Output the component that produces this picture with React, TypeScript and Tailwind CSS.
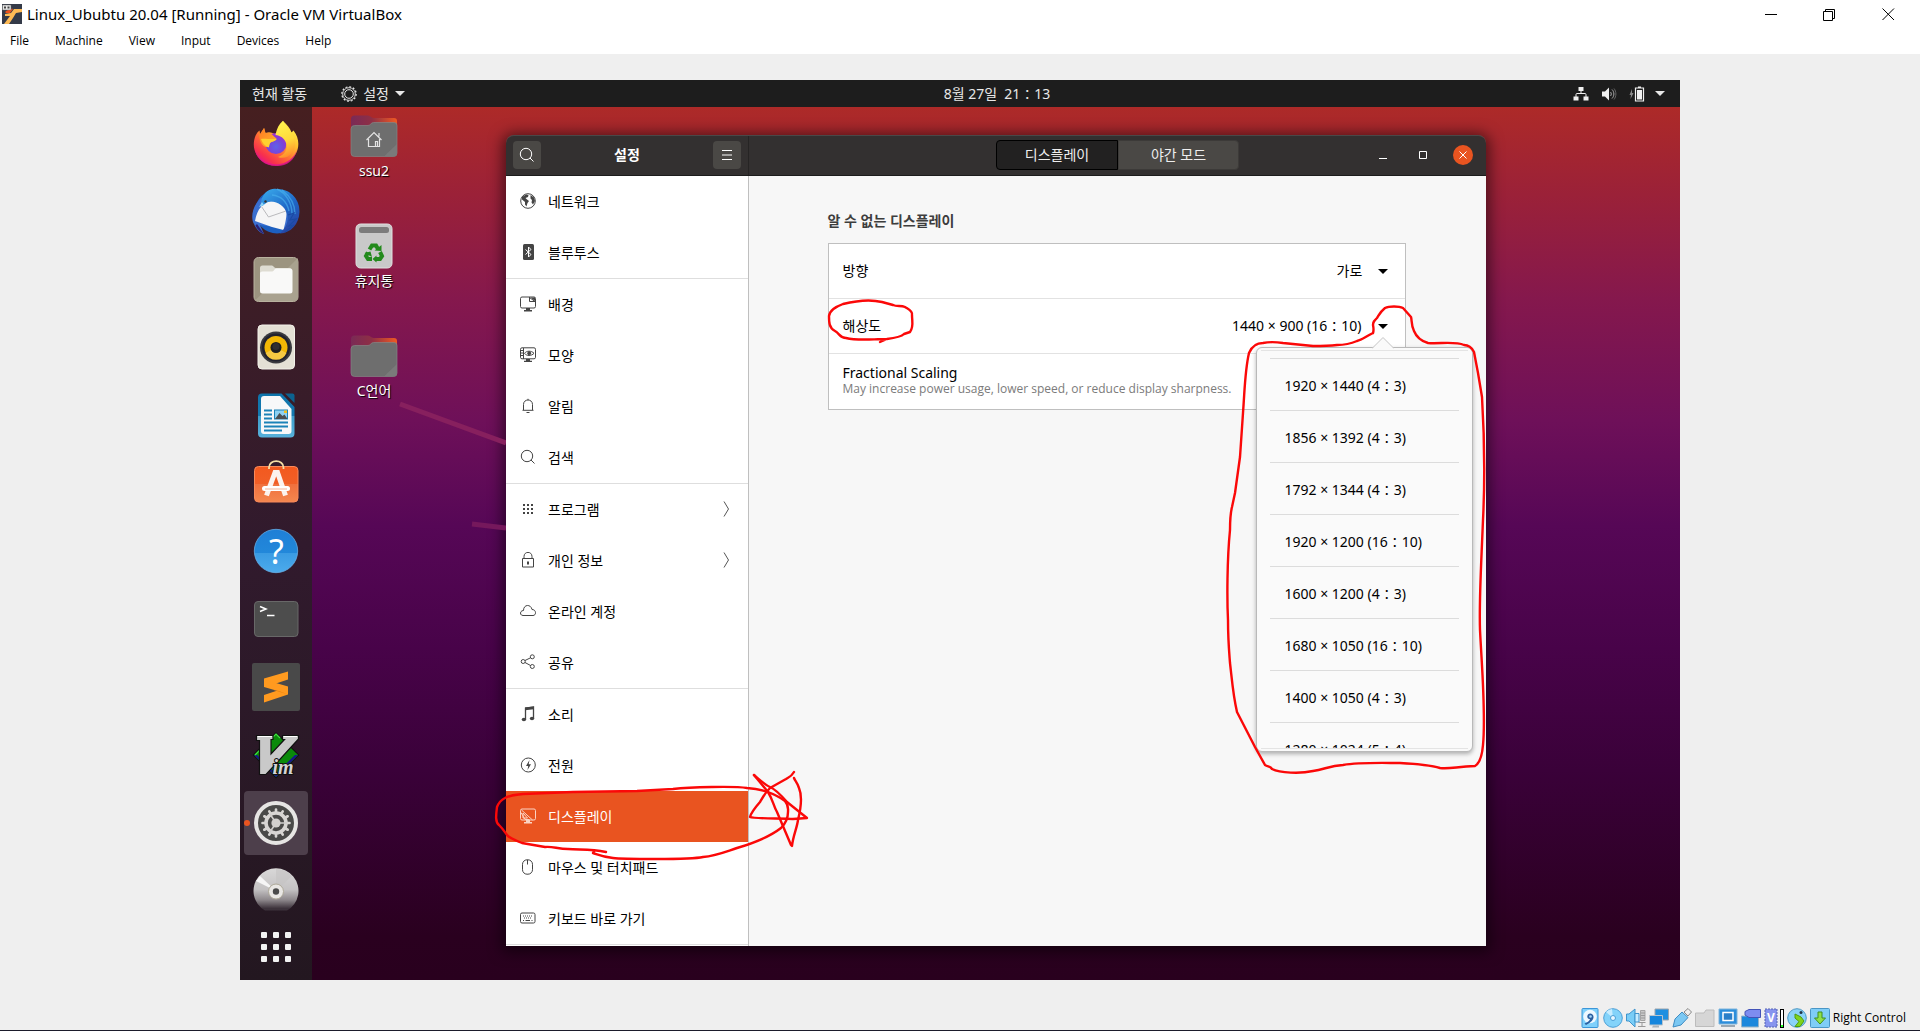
import React from "react";
import type { ReactNode } from "react";

const UI = "font-['Noto_Sans','Noto_Sans_CJK_KR',sans-serif]";

/* ---------- dock icons (48 x 48) ---------- */

function Svg48({ children }: { children: ReactNode }) {
  return (
    <svg viewBox="0 0 48 48" className="size-12" aria-hidden="true">
      {children}
    </svg>
  );
}

function FirefoxIcon() {
  return (
    <Svg48>
      <defs>
        <linearGradient id="ffBody" x1="0.85" y1="0.1" x2="0.2" y2="0.95">
          <stop offset="0" stopColor="#fff04a" />
          <stop offset="0.3" stopColor="#ffbd2e" />
          <stop offset="0.6" stopColor="#ff6b35" />
          <stop offset="0.85" stopColor="#f8314c" />
          <stop offset="1" stopColor="#e31587" />
        </linearGradient>
        <radialGradient id="ffGlobe" cx="0.5" cy="0.65" r="0.6">
          <stop offset="0" stopColor="#5f62e8" />
          <stop offset="0.6" stopColor="#7a43d9" />
          <stop offset="1" stopColor="#a12fd0" />
        </radialGradient>
        <linearGradient id="ffFlame" x1="0.4" y1="0" x2="0.6" y2="1">
          <stop offset="0" stopColor="#fff44f" />
          <stop offset="0.55" stopColor="#ffd83a" />
          <stop offset="1" stopColor="#ff8a2a" />
        </linearGradient>
        <linearGradient id="ffHead" x1="0" y1="0" x2="1" y2="1">
          <stop offset="0" stopColor="#ff7a22" />
          <stop offset="1" stopColor="#ffb52e" />
        </linearGradient>
      </defs>
      <path d="M24 46.500C12 46.500 1.800 37.500 1.800 25.500C1.800 20 3.500 14.500 7.500 11.500L8 15L12 9L13.500 14C17 12.500 21 13.500 23.500 16L31 2C35 6 38 9 39.500 13.500L41.500 11.500C45 16 46.500 21 46.300 25.500C46 37 36 46.500 24 46.500Z" fill="url(#ffBody)" />
      <path d="M3 31C6 40.500 14 45 24 45.500C34 45 43 39 45 30C43 42 34 47.500 24 47C13 47 5 40.500 3 31Z" fill="#e0148c" opacity="0.85" />
      <circle cx="24" cy="24.500" r="10.500" fill="url(#ffGlobe)" />
      <path d="M23.500 16C24.500 10 27 5 31 1.800C32 5 35.500 8 38.500 12C44 19 44.500 28 40 34C36.500 38.500 30 40 26 38C33 36 36 30 34 24C32.500 19 28 16.500 23.500 16Z" fill="url(#ffFlame)" />
      <path d="M7.500 11.500L8 15.500L12.200 9L13.500 14.200C17 13.500 20 14.500 22 17.500C24 19 25 19.500 24.500 20.500C23 22.500 19.500 22 18 24C16.800 26 17 28 14.500 28C11 28 6 23 7.500 11.500Z" fill="url(#ffHead)" />
      <path d="M9 20C12 19 17 20.500 24.500 20C23 23 19.500 22 18 24.200C17 26 17.500 27.500 16.500 28.500C13 27 10 24 9 20Z" fill="#ffd02f" />
    </Svg48>
  );
}

function ThunderbirdIcon() {
  return (
    <Svg48>
      <defs>
        <linearGradient id="tbBody" x1="0.2" y1="0" x2="0.8" y2="1">
          <stop offset="0" stopColor="#36a4e8" />
          <stop offset="0.5" stopColor="#1f67c7" />
          <stop offset="1" stopColor="#2a3f9f" />
        </linearGradient>
      </defs>
      <circle cx="25" cy="24.500" r="22" fill="#1c5fc0" />
      <path d="M9 11C1 18-2 30 2 37C4 42 8 46 12 47L8 38L36 42L38 20L24 12Z" fill="#3a6fd0" />
      <path d="M5 37L12 47C9 46 5 42 3.500 38.500Z" fill="#2a2074" />
      <path d="M9 17C15 13 28 13 33 20C36 24 34 34 31.500 43L20 40L3 34C4 28 6 23 9 20Z" fill="#f5f5f6" />
      <path d="M9.500 19.500L16.500 30L34 24" fill="none" stroke="#a9a9ad" strokeWidth="0.800" />
      <path d="M10 11C13 4 19 0.500 25 2C40 2 48 14 47.500 25C47 37 39 46 28 46.500C34 41 37 34 35 27C33 19 26 15 19 14.500C15 14.500 12.500 17.500 10 19C9 16 9 13.500 10 11Z" fill="url(#tbBody)" />
      <path d="M25 2C34 6 40 16 40 27M30 3C38 9 43 17 43 27M20 8C29 9 35 15 37 24" fill="none" stroke="#4bb4f0" strokeWidth="1.500" opacity="0.6" />
      <path d="M36 28L42 26L38 33L44 32L37 39L42 38L33 45" fill="none" stroke="#1b4aa4" strokeWidth="1.200" />
      <circle cx="13.500" cy="14.500" r="1.200" fill="#333" />
      <path d="M10 15L7 20L12 18Z" fill="#8cd4f8" />
    </Svg48>
  );
}

function FilesIcon() {
  return (
    <Svg48>
      <rect x="2" y="2.500" width="44" height="44" rx="4.500" fill="#9c9480" stroke="#b9b29f" />
      <path d="M2.500 46L46 3V42a4 4 0 0 1-4 4H6Z" fill="#a9a28f" />
      <path d="M8 13a2.500 2.500 0 0 1 2.500-2.500H20c1.500 0 2 2.500 3.500 2.500H37a3 3 0 0 1 3 3V18H8Z" fill="#dedcd2" />
      <path d="M8 18.500c0-1.200 1-2 2.200-2h10c2 0 2-3 4-3H38a2.500 2.500 0 0 1 2.500 2.500V36a2.500 2.500 0 0 1-2.500 2.500H10.500A2.500 2.500 0 0 1 8 36Z" fill="#f9f9f8" />
    </Svg48>
  );
}

function RhythmboxIcon() {
  return (
    <Svg48>
      <rect x="6" y="2" width="36.500" height="44" rx="4" fill="#e4e0d5" stroke="#f3f1ea" />
      <circle cx="24" cy="24.500" r="16" fill="#3a3a3f" />
      <circle cx="24" cy="24.500" r="14" fill="#22222e" />
      <circle cx="24" cy="24.500" r="11.500" fill="#f2b705" />
      <path d="M24 24.500L13.500 30A11.500 11.500 0 0 0 34.500 30Z" fill="#f5c842" />
      <circle cx="24" cy="24.500" r="5.500" fill="#1d1d1f" />
      <circle cx="24" cy="23.500" r="3.500" fill="#2e2e31" />
    </Svg48>
  );
}

function WriterIcon() {
  return (
    <Svg48>
      <defs>
        <linearGradient id="wr" x1="0" y1="0" x2="0" y2="1">
          <stop offset="0" stopColor="#0e74ab" />
          <stop offset="0.5" stopColor="#1579b0" />
          <stop offset="0.5" stopColor="#3c9dcb" />
          <stop offset="1" stopColor="#58b1db" />
        </linearGradient>
      </defs>
      <path d="M10 2.500H29.500L42.500 16V42.500a4 4 0 0 1-4 4H10a4 4 0 0 1-4-4V6.500a4 4 0 0 1 4-4Z" fill="url(#wr)" />
      <path d="M12 5H28L39.500 18V40a3 3 0 0 1-3 3H12a3 3 0 0 1-3-3V8a3 3 0 0 1 3-3Z" fill="#f8f8f9" />
      <path d="M33 2.500H40.500a2 2 0 0 1 2 2V12Z" fill="#0c628f" />
      <path d="M12 19.500h8M12 23.500h8M12 27.500h8M12 31.500h24M12 35.500h24M12 39.500h18" stroke="#1b82b8" strokeWidth="1.800" />
      <rect x="22.500" y="19" width="13" height="9" fill="#8dd1f2" stroke="#1b82b8" />
      <path d="M23 28l4.500-6 3 3 2-1.500 3 4.500Z" fill="#4b4f52" />
      <rect x="32" y="19.500" width="3" height="2.500" fill="#f0c020" />
    </Svg48>
  );
}

function SoftwareIcon() {
  return (
    <Svg48>
      <defs>
        <linearGradient id="sw" x1="0" y1="0" x2="0" y2="1">
          <stop offset="0" stopColor="#f3591f" />
          <stop offset="0.5" stopColor="#f15f27" />
          <stop offset="0.5" stopColor="#f0703d" />
          <stop offset="1" stopColor="#f4874f" />
        </linearGradient>
      </defs>
      <rect x="2.500" y="7.500" width="43.500" height="35.500" rx="4" fill="url(#sw)" stroke="#f9895a" />
      <path d="M17 10V8.500C17 0 31.500 0 31.500 8.500V10" fill="none" stroke="#f6dfa5" strokeWidth="1.800" />
      <path d="M14.500 36.500L23 13.500h2.500L33.500 36.500" fill="none" stroke="#fbf3ef" strokeWidth="5" />
      <path d="M12.500 29.500H35.500" stroke="#fff" strokeWidth="5" strokeLinecap="round" />
      <path d="M13 30H35" stroke="#f2a27f" strokeWidth="0.800" />
    </Svg48>
  );
}

function HelpIcon() {
  return (
    <Svg48>
      <defs>
        <linearGradient id="hp" x1="0" y1="0" x2="0" y2="1">
          <stop offset="0" stopColor="#1f7fd6" />
          <stop offset="0.55" stopColor="#2288da" />
          <stop offset="0.55" stopColor="#3a9be3" />
          <stop offset="1" stopColor="#4cabec" />
        </linearGradient>
      </defs>
      <circle cx="24" cy="24" r="21.700" fill="url(#hp)" stroke="#6db8f0" strokeWidth="0.700" />
      <text x="24.500" y="37" textAnchor="middle" fontSize="34" fill="#fff" className={UI}>?</text>
    </Svg48>
  );
}

function TerminalIcon() {
  return (
    <Svg48>
      <rect x="2.500" y="6.500" width="43.500" height="35" rx="3.500" fill="#4d4d4d" stroke="#686868" />
      <path d="M8 11.500L14 14L8 16.500M15 20.500H22.500" fill="none" stroke="#fff" strokeWidth="1.500" />
    </Svg48>
  );
}

function SublimeIcon() {
  return (
    <Svg48>
      <rect width="48" height="48" rx="2" fill="#494949" />
      <path d="M36 8.500V16.500L24 20.500L12 24V15.500Z" fill="#ff9a1f" />
      <path d="M12 16.500L36 23.500V31L12 24Z" fill="#ff9a1f" />
      <path d="M36 24V31.500L12 39.500V32Z" fill="#ff9a1f" />
      <path d="M20 26.500L36 31.500L27 28Z" fill="#e8800c" />
    </Svg48>
  );
}

function VimIcon() {
  return (
    <Svg48>
      <path d="M24 1L47.500 24L24 47.500L0.500 24Z" fill="#111" />
      <path d="M24 2.500L46 24L24 46L2 24Z" fill="#0a8a0a" />
      <path d="M2 24L24 46L46 24H43L24 42.500L5 24Z" fill="#16168a" />
      <path d="M3 24L24 3L28 7" fill="none" stroke="#3fe03f" strokeWidth="1.200" />
      <path d="M4.500 4.500H21V8.500H19V23L32.500 8.500H30.500V4.500H46.500V8L14 43.500H7.500V9.500H4.500Z" fill="#c9c9c9" stroke="#111" strokeWidth="1.200" />
      <path d="M5.500 5.500H20M31.500 5.500H45" stroke="#fff" />
      <text x="20.500" y="43" fontSize="20" fontStyle="italic" fontWeight="700" fill="#d4d4d4" stroke="#111" strokeWidth="2" paintOrder="stroke" className="font-['Liberation_Serif',serif]">im</text>
    </Svg48>
  );
}

const TEETH = Array.from({ length: 12 }, (_, i) => i * 30);

function SettingsIcon() {
  return (
    <Svg48>
      <circle cx="24" cy="24" r="20" fill="#4a4a48" stroke="#e6e5e3" strokeWidth="4" />
      <g stroke="#d8d6d3" strokeWidth="2.600" strokeLinecap="round">
        {TEETH.map((a) => (
          <path key={a} d="M24 13V10.500" transform={`rotate(${a} 24 24)`} />
        ))}
      </g>
      <circle cx="24" cy="24" r="10" fill="none" stroke="#d8d6d3" strokeWidth="3.600" />
      <path d="M24 24L18 15M24 24L18 33M24 24H35" stroke="#d0cecb" strokeWidth="1.600" />
      <circle cx="24" cy="24" r="4.600" fill="#d3d1ce" />
    </Svg48>
  );
}

function DiscIcon() {
  return (
    <Svg48>
      <defs>
        <linearGradient id="cd" x1="0" y1="0" x2="0" y2="1">
          <stop offset="0" stopColor="#d9d8d8" />
          <stop offset="0.5" stopColor="#c4c2c3" />
          <stop offset="0.75" stopColor="#8d878b" />
          <stop offset="0.95" stopColor="#3c323b" />
        </linearGradient>
      </defs>
      <path d="M13 43.500A22.500 22.500 0 1 1 35 43.500Z" fill="url(#cd)" />
      <path d="M24 24L4 14L8 9Z" fill="#f6f6f6" />
      <path d="M24 24V2A22 22 0 0 1 40 9Z" fill="#c4c3c3" opacity="0.6" />
      <circle cx="24" cy="24.500" r="7.500" fill="#e9e7e4" stroke="#aea999" />
      <circle cx="24" cy="24.500" r="3.200" fill="#4a4a4a" />
    </Svg48>
  );
}

const DOCK: { name: string; icon: ReactNode; active?: boolean }[] = [
  { name: "Firefox", icon: <FirefoxIcon /> },
  { name: "Thunderbird", icon: <ThunderbirdIcon /> },
  { name: "Files", icon: <FilesIcon /> },
  { name: "Rhythmbox", icon: <RhythmboxIcon /> },
  { name: "LibreOffice Writer", icon: <WriterIcon /> },
  { name: "Ubuntu Software", icon: <SoftwareIcon /> },
  { name: "Help", icon: <HelpIcon /> },
  { name: "Terminal", icon: <TerminalIcon /> },
  { name: "Sublime Text", icon: <SublimeIcon /> },
  { name: "GVim", icon: <VimIcon /> },
  { name: "Settings", icon: <SettingsIcon />, active: true },
  { name: "Disc", icon: <DiscIcon /> },
];

function Dock() {
  return (
    <nav aria-label="Dock" className="flex w-18 shrink-0 flex-col items-center gap-1 bg-linear-to-b from-[#461f20] via-[#311a2d] to-[#231720] pt-1">
      {DOCK.map((d) => (
        <button
          key={d.name}
          aria-label={d.name}
          className={
            d.active
              ? "relative flex size-16 shrink-0 items-center justify-center rounded bg-[#4d3f4b]"
              : "flex size-16 shrink-0 items-center justify-center rounded"
          }
        >
          {d.icon}
          {d.active && <span className="absolute top-[29px] left-0 size-1.5 rounded-full bg-[#e95420]" />}
        </button>
      ))}
      <button aria-label="Show applications" className="-mt-1 grid size-12 shrink-0 grid-cols-[6px_6px_6px] content-center justify-center gap-1.5">
        {TEETH.slice(0, 9).map((k) => (
          <span key={k} className="size-1.5 rounded-[1px] bg-[#f2f2f2]" />
        ))}
      </button>
    </nav>
  );
}

/* ---------- desktop icons ---------- */

function FolderIcon({ id, home }: { id: string; home?: boolean }) {
  return (
    <Svg48>
      <defs>
        <linearGradient id={id} x1="0" y1="0" x2="1" y2="0">
          <stop offset="0" stopColor="#7a2a56" />
          <stop offset="0.45" stopColor="#8e2f45" />
          <stop offset="1" stopColor="#f05a22" />
        </linearGradient>
      </defs>
      <path d="M1 7a3.500 3.500 0 0 1 3.500-3.500H18c2.500 0 3 2.500 5.500 2.500H44a3 3 0 0 1 3 3V18H1Z" fill={`url(#${id})`} />
      <path d="M1 17a3.500 3.500 0 0 1 3.500-3.500H18c2.500 0 3-3 5.500-3H44a3 3 0 0 1 3 3V41a3.500 3.500 0 0 1-3.500 3.500h-39A3.500 3.500 0 0 1 1 41Z" fill="#6e6e6e" stroke="#858585" strokeWidth="0.700" />
      <path d="M47 32V41a3.500 3.500 0 0 1-3.500 3.500H34Z" fill="#7a7a7a" />
      {home && (
        <path d="M16.500 28L24 20.500L31.500 28M18.500 27V34.500H29.500V27M29 24.500V21M25.500 34V29.500H27.500V34" fill="none" stroke="#e4e4e4" strokeWidth="1.200" />
      )}
    </Svg48>
  );
}

function TrashIcon() {
  return (
    <Svg48>
      <rect x="6" y="2" width="36" height="44" rx="4.500" fill="#c9c9c9" stroke="#e0e0e0" />
      <rect x="9" y="5" width="30" height="6" rx="2.500" fill="#7c7c7c" />
      <g fill="none" stroke="#238a1c" strokeWidth="4">
        <path d="M19.500 27.500L22 23.500H26L28 27" />
        <path d="M30 30L32 34L30 37H25.500" />
        <path d="M22 37H18L16 34L18 30.500" />
      </g>
      <path d="M24.500 28.500L31.500 29V23Z M26.500 33.500V40.500L22.500 37Z M14.500 31L20.500 29.500L22 35Z" fill="#238a1c" />
    </Svg48>
  );
}

function DesktopIcons() {
  const items = [
    { label: "ssu2", icon: <FolderIcon id="folderA" home /> },
    { label: "휴지통", icon: <TrashIcon /> },
    { label: "C언어", icon: <FolderIcon id="folderB" /> },
  ];
  return (
    <ul className="mr-[70px] flex w-31 shrink-0 flex-col gap-10 pt-[5px]">
      {items.map((i) => (
        <li key={i.label} className="flex h-[70px] flex-col items-center">
          {i.icon}
          <span className="text-sm leading-[22px] text-white [text-shadow:1px_1px_1px_#000]">{i.label}</span>
        </li>
      ))}
    </ul>
  );
}

/* ---------- settings window ---------- */

function Ico({ children }: { children: ReactNode }) {
  return (
    <svg viewBox="0 0 16 16" className="size-4 shrink-0" fill="none" stroke="currentColor" strokeWidth="1" aria-hidden="true">
      {children}
    </svg>
  );
}

const searchShape = (
  <Ico>
    <circle cx="7" cy="7" r="5.700" />
    <path d="M11 11L14.500 14.500" />
  </Ico>
);

type Item = { label: string; icon: ReactNode; arrow?: boolean; active?: boolean };

const GROUPS: Item[][] = [
  [
    {
      label: "네트워크",
      icon: (
        <Ico>
          <circle cx="8" cy="8" r="7.300" />
          <path d="M2 4L6 1.500L8.500 2L8 4L5.500 5L7 6.500L9 8L7.500 10L6.500 13.500L5 11.500V9L2 6.500Z M10.500 2L14 4.500L15 8L13 11.500L11.500 9.500L12 7L10.500 5.500Z" fill="currentColor" stroke="none" />
        </Ico>
      ),
    },
    {
      label: "블루투스",
      icon: (
        <Ico>
          <rect x="3" y="0" width="11" height="16" rx="1.500" fill="currentColor" stroke="none" />
          <path d="M5.500 5.500L11 10.500L8.500 13V3L11 5.500L5.500 10.500" stroke="#fff" />
        </Ico>
      ),
    },
  ],
  [
    {
      label: "배경",
      icon: (
        <Ico>
          <rect x="0.500" y="1" width="15" height="11" rx="1.500" />
          <path d="M9.500 1V5.500H15.500M9.500 1.500L15 5.500" />
          <path d="M10.500 1.500H15V5Z" fill="currentColor" stroke="none" />
          <path d="M6 12h4v2h2v1.500H4V14h2Z" fill="currentColor" stroke="none" />
        </Ico>
      ),
    },
    {
      label: "모양",
      icon: (
        <Ico>
          <rect x="0.500" y="0.800" width="15" height="11" rx="1.500" />
          <path d="M3.500 1V12M0.500 3.500H3M0.500 6H3M0.500 8.500H3" />
          <path d="M4.500 6.300C6.500 3.500 11.500 3.500 14 6.300C11.500 9.200 6.500 9.200 4.500 6.300Z" />
          <circle cx="9.200" cy="6.300" r="1.500" fill="currentColor" />
          <path d="M6 12h4v1.800h2v1.200H4V13.800h2Z" fill="currentColor" stroke="none" />
        </Ico>
      ),
    },
    {
      label: "알림",
      icon: (
        <Ico>
          <path d="M3.500 12V6.500C3.500 0.500 12.500 0.500 12.500 6.500V12M2.500 12.300H13.500M8 2V0.800M6.500 14.500H9.500" />
        </Ico>
      ),
    },
    { label: "검색", icon: searchShape },
  ],
  [
    {
      label: "프로그램",
      arrow: true,
      icon: (
        <Ico>
          <path d="M3 4H13M3 8H13M3 12H13" strokeWidth="2" strokeDasharray="2 2" />
        </Ico>
      ),
    },
    {
      label: "개인 정보",
      arrow: true,
      icon: (
        <Ico>
          <path d="M2.500 6.500H13.500V15H2.500ZM4 6.500V4.500C4 -1 12 -1 12 4.500V6.500" />
          <rect x="7" y="9.500" width="2" height="3" fill="currentColor" stroke="none" />
        </Ico>
      ),
    },
    {
      label: "온라인 계정",
      icon: (
        <Ico>
          <path d="M3 12.500C-0.500 12.500-0.300 7.500 3.500 7.500C3.500 1 11 1 12 6.500C16.500 6.500 16.500 12.500 13 12.500Z" />
        </Ico>
      ),
    },
    {
      label: "공유",
      icon: (
        <Ico>
          <circle cx="3.200" cy="7.500" r="2" />
          <circle cx="12.300" cy="2.800" r="2" />
          <circle cx="12.300" cy="12.500" r="2" />
          <path d="M5 6.500L10.500 3.800M5 8.500L10.500 11.500" />
        </Ico>
      ),
    },
  ],
  [
    {
      label: "소리",
      icon: (
        <Ico>
          <path d="M5.500 13.500V2L13.500 1V12.500" strokeWidth="1.300" />
          <path d="M5 1.500L14 0.500V3.300L5 4.300Z" fill="currentColor" stroke="none" />
          <ellipse cx="3.900" cy="13.500" rx="2.200" ry="1.800" fill="currentColor" stroke="none" />
          <ellipse cx="12" cy="12.500" rx="2.200" ry="1.800" fill="currentColor" stroke="none" />
        </Ico>
      ),
    },
    {
      label: "전원",
      icon: (
        <Ico>
          <circle cx="8.300" cy="8" r="7" />
          <path d="M9.500 3L6 9H8.200L7.500 13L11 7.200H8.700Z" fill="currentColor" stroke="none" />
        </Ico>
      ),
    },
    {
      label: "디스플레이",
      active: true,
      icon: (
        <Ico>
          <rect x="0.500" y="1" width="15" height="11" rx="1.500" />
          <path d="M1.500 2L12.500 12M1 4.500L5 11.500L9.500 11.500M3 5V10H7.500Z" />
          <path d="M6 12h4v2h2v1.500H4V14h2Z" fill="currentColor" stroke="none" />
        </Ico>
      ),
    },
    {
      label: "마우스 및 터치패드",
      icon: (
        <Ico>
          <rect x="2.500" y="0.800" width="10" height="14.400" rx="4.500" />
          <path d="M7.500 1V5.500" />
        </Ico>
      ),
    },
    {
      label: "키보드 바로 가기",
      icon: (
        <Ico>
          <rect x="0.500" y="3" width="14.500" height="10" rx="1.500" />
          <path d="M3 6H13M4 8H12" strokeDasharray="1 1" />
          <path d="M3 10.500H4M5.500 10.500H10M11.500 10.500H12.500" />
        </Ico>
      ),
    },
  ],
];

function Sidebar() {
  return (
    <nav aria-label="설정" className="w-[243px] shrink-0 border-r border-[#bfbfbf] bg-white">
      {GROUPS.map((group) => (
        <ul key={group[0].label} className="border-b border-[#dedede]">
          {group.map((item) => (
            <li key={item.label}>
              <a
                href="#"
                aria-current={item.active ? "page" : undefined}
                className={
                  item.active
                    ? "flex h-[51px] items-center gap-3 bg-[#e95420] px-3.5 pb-0.5 text-sm text-white"
                    : "flex h-[51px] items-center gap-3 px-3.5 pb-0.5 text-sm text-black"
                }
              >
                <span className={item.active ? "text-[#fbd3c4]" : "text-[#444]"}>{item.icon}</span>
                <span className="flex-1 pt-0.5">{item.label}</span>
                {item.arrow && (
                  <svg viewBox="0 0 16 16" className="size-4 text-[#555]" fill="none" stroke="currentColor" aria-hidden="true">
                    <path d="M6 0.500L10.500 8L6 15.500" />
                  </svg>
                )}
              </a>
            </li>
          ))}
        </ul>
      ))}
    </nav>
  );
}

function Caret() {
  return (
    <svg viewBox="0 0 10 5" className="h-[5px] w-2.5 shrink-0" aria-hidden="true">
      <path d="M0 0H10L5 5Z" fill="currentColor" />
    </svg>
  );
}

const MODES = [
  "1920 × 1440 (4∶3)",
  "1856 × 1392 (4∶3)",
  "1792 × 1344 (4∶3)",
  "1920 × 1200 (16∶10)",
  "1600 × 1200 (4∶3)",
  "1680 × 1050 (16∶10)",
  "1400 × 1050 (4∶3)",
  "1280 × 1024 (5∶4)",
];

function ResolutionMenu() {
  return (
    <div className="absolute top-12 -right-[68px] z-10 w-[217px] rounded-md border border-[#b9b9b9] bg-[#fafafa] px-1 py-0.5 shadow-[0_2px_4px_rgba(0,0,0,0.3)]">
      <svg viewBox="0 0 22 12" className="absolute -top-[11px] left-[115px] h-3 w-[22px]" aria-hidden="true">
        <path d="M0 11.500L11 0.500L22 11.500" fill="#fafafa" stroke="#c4c4c4" />
        <path d="M2 12H20" stroke="#fafafa" strokeWidth="2" />
      </svg>
      <ul role="listbox" aria-label="해상도" className="h-[399px] overflow-hidden border-y border-[#e4e4e4] px-[9px] pt-[7px]">
        {MODES.map((m) => (
          <li key={m} role="option" aria-selected="false" className="h-[52px] border-t border-[#dcdcdc] px-[15px] text-sm leading-[53px] text-black">
            {m}
          </li>
        ))}
      </ul>
    </div>
  );
}

function DisplayPanel() {
  return (
    <main className="min-w-0 flex-1 bg-[#f7f7f7] pt-[35px] pr-[26px] pl-6">
      <div className="mx-auto max-w-[578px]">
        <h2 className="text-sm font-bold text-[#3d3d3d]">알 수 없는 디스플레이</h2>
        <div className="mt-3 divide-y divide-[#e2e2e2] border border-[#bfbfbf] bg-white text-sm text-black">
          <div className="flex h-[55px] items-center justify-between px-3.5">
            <label htmlFor="orientation">방향</label>
            <div className="relative flex items-center">
              <select id="orientation" defaultValue="가로" className="appearance-none bg-transparent pr-7 outline-none">
                <option>가로</option>
              </select>
              <span className="pointer-events-none absolute right-[3px]">
                <Caret />
              </span>
            </div>
          </div>
          <div className="relative flex h-[55px] items-center justify-between px-3.5">
            <span id="resolution">해상도</span>
            <button aria-labelledby="resolution" aria-haspopup="listbox" aria-expanded="true" className="flex items-center gap-4 pr-[3px]">
              <span>1440 × 900 (16∶10)</span>
              <Caret />
            </button>
            <ResolutionMenu />
          </div>
          <div className="flex h-[55px] flex-col justify-center px-3.5 pb-1">
            <div className="leading-[18px]">Fractional Scaling</div>
            <div className="font-['Open_Sans',sans-serif] text-xs leading-[14px] text-[#7b7b7b]">May increase power usage, lower speed, or reduce display sharpness.</div>
          </div>
        </div>
      </div>
    </main>
  );
}

function SettingsWindow() {
  return (
    <section aria-label="설정" className="mt-7 mr-[194px] mb-[34px] flex min-w-0 flex-1 flex-col rounded-t-lg shadow-[0_2px_14px_4px_rgba(0,0,0,0.5)]">
      <header className="flex h-[41px] shrink-0 rounded-t-lg border-t border-b border-t-[#4a4848] border-b-[#1c1c1c] bg-[#333030] text-white">
        <div className="flex w-[243px] shrink-0 items-center justify-between border-r border-[#262424] px-[7px] pb-px">
          <button aria-label="검색" className="flex size-7 items-center justify-center rounded bg-[#4a4845]">
            {searchShape}
          </button>
          <h1 className="text-sm font-bold">설정</h1>
          <button aria-label="메뉴" className="flex size-7 items-center justify-center rounded bg-[#4a4845]">
            <Ico>
              <path d="M3 3.500H13M3 8H13M3 12.500H13" />
            </Ico>
          </button>
        </div>
        <div className="grid min-w-0 flex-1 grid-cols-[1fr_auto_1fr] items-center pb-px">
          <div className="col-start-2 flex text-sm leading-[18px]">
            <button className="h-[30px] w-[122px] rounded-l border border-black bg-[#222121] text-[#eee]">디스플레이</button>
            <button className="h-[30px] w-[121px] rounded-r border border-[#3c3a38] bg-[#4a4845] text-[#eee]">야간 모드</button>
          </div>
          <div className="flex items-center gap-5 justify-self-end pr-[13px]">
            <button aria-label="최소화" className="flex size-5 items-center justify-center">
              <svg viewBox="0 0 10 10" className="size-2.5" aria-hidden="true">
                <path d="M1 8.500H9" stroke="#fff" />
              </svg>
            </button>
            <button aria-label="최대화" className="flex size-5 items-center justify-center">
              <svg viewBox="0 0 10 10" className="size-2.5" aria-hidden="true">
                <path d="M1.500 1.500H8.500V8.500H1.500Z" fill="none" stroke="#fff" />
              </svg>
            </button>
            <button aria-label="닫기" className="flex size-5 items-center justify-center rounded-full bg-[#e95420]">
              <svg viewBox="0 0 10 10" className="size-2.5" aria-hidden="true">
                <path d="M1.500 1.500L8.500 8.500M8.500 1.500L1.500 8.500" stroke="#fff" />
              </svg>
            </button>
          </div>
        </div>
      </header>
      <div className="flex min-h-0 flex-1">
        <Sidebar />
        <DisplayPanel />
      </div>
    </section>
  );
}

/* ---------- guest screen ---------- */

function TopBar() {
  return (
    <header className="grid h-[27px] shrink-0 grid-cols-[1fr_auto_1fr] items-center bg-[#1d1d1d] text-sm leading-5 text-[#e8e8e8]">
      <div className="flex items-center pl-3">
        <button>현재 활동</button>
        <button className="ml-[34px] flex items-center gap-1.5">
          <svg viewBox="0 0 16 16" className="size-4" fill="none" stroke="currentColor" aria-hidden="true">
            <circle cx="8" cy="8" r="4.300" strokeWidth="1" />
            <circle cx="8" cy="8" r="7.200" strokeWidth="1.200" strokeDasharray="1.900 1.870" />
            <circle cx="8" cy="8" r="6.300" strokeWidth="0.900" />
          </svg>
          <span>설정</span>
          <Caret />
        </button>
      </div>
      <time className="ml-[74px] whitespace-pre">8월 27일  21∶13</time>
      <div className="flex items-center justify-self-end pr-[15px]">
        <svg viewBox="0 0 16 16" className="size-4" aria-hidden="true">
          <path d="M8 4V7.500M3 11V8.500Q3 7.500 4 7.500H12Q13 7.500 13 8.500V11" fill="none" stroke="#f0f0f0" />
          <path d="M5.500 1h5v4h-5ZM0.500 10.500h5v4h-5ZM10.500 10.500h5v4h-5Z" fill="#f0f0f0" />
        </svg>
        <svg viewBox="0 0 16 16" className="ml-3 size-4" aria-hidden="true">
          <path d="M1 5.500H4L8 1.500V14.500L4 10.500H1Z" fill="#f0f0f0" />
          <path d="M9.500 6C10.500 7 10.500 9 9.500 10M11 3.500C13.500 6 13.500 10 11 12.500" fill="none" stroke="#aaa" />
          <path d="M13 2.500C15.500 5.500 15.500 10.500 13 13.500" fill="none" stroke="#666" />
        </svg>
        <svg viewBox="0 0 16 16" className="ml-3 size-4" aria-hidden="true">
          <path d="M3 3L0.500 9H2L1.500 13L4.500 7H3Z" fill="#8a8a8a" />
          <path d="M6.500 2H14.500V15H6.500ZM9 1H12" fill="none" stroke="#f0f0f0" strokeWidth="1.200" />
          <path d="M8 4H13V13.500H8Z" fill="#f0f0f0" />
        </svg>
        <span className="ml-2.5">
          <Caret />
        </span>
      </div>
    </header>
  );
}

function GuestScreen() {
  return (
    <div className="flex flex-1 flex-col overflow-hidden">
      <TopBar />
      <div className="relative flex flex-1 bg-[linear-gradient(180deg,#ad2a28_0%,#9b2138_10%,#85184d_22%,#6e1059_36%,#560756_48%,#480349_62%,#3a0139_76%,#2a001f_95%,#29001e_100%)]">
        <Dock />
        <svg viewBox="0 0 194 300" className="pointer-events-none absolute top-[250px] left-18 h-[300px] w-[194px]" aria-hidden="true">
          <path d="M88 47L194 86" stroke="#87205e" strokeWidth="5" />
          <path d="M160 167L194 171" stroke="#75185c" strokeWidth="5" />
        </svg>
        <DesktopIcons />
        <SettingsWindow />
      </div>
    </div>
  );
}

/* ---------- host window ---------- */

function StatusIcon({ children }: { children: ReactNode }) {
  return (
    <svg viewBox="0 0 20 20" className="size-5 shrink-0" aria-hidden="true">
      {children}
    </svg>
  );
}

function StatusBar() {
  return (
    <footer className="flex h-[27px] shrink-0 items-center justify-end gap-[3px] border-b border-[#1b1b2b] pt-0.5 pr-3.5">
      <StatusIcon>
        <rect x="2" y="0.500" width="16" height="19" rx="1" fill="#7fd0fb" stroke="#3b96d8" />
        <circle cx="10" cy="8.500" r="6.800" fill="#eef8ff" />
        <path d="M8 6.500C10 4.500 14 6 13.500 9.500C13 13 9.500 15 6 17L4.500 15.500C7 14.500 9.500 13 10 11C7.500 11.500 6.500 8.500 8 6.500Z" fill="#2c5fa0" />
        <circle cx="10.500" cy="8.500" r="1.300" fill="#a9d8f8" />
      </StatusIcon>
      <StatusIcon>
        <circle cx="10" cy="10" r="9.300" fill="#83d3fa" stroke="#4b9fd6" />
        <path d="M10 10L3 4A9 9 0 0 1 9 1Z" fill="#c6ecff" />
        <circle cx="10" cy="10" r="2.500" fill="#e9f7ff" stroke="#4b9fd6" />
      </StatusIcon>
      <StatusIcon>
        <path d="M0.500 6H3L9 1V19L3 13H0.500Z" fill="#79cdf7" stroke="#3f94cc" />
        <path d="M9 5.500H13V14H9Z" fill="#c8ecff" stroke="#3f94cc" />
        <path d="M14.500 2.500H19V12.500H14.500Z" fill="#c9c9c9" stroke="#a5a5a5" />
        <path d="M12.500 14.500H19.500M16 14V18M12 18.500H19.500M15 5H19M15 7.500H19M15 10H19" fill="none" stroke="#999" />
      </StatusIcon>
      <StatusIcon>
        <path d="M6 1H19.500V12H6Z" fill="#1e8fe0" stroke="#9aa4ad" />
        <path d="M0.500 7.500H13.500V17H0.500Z" fill="#1586dd" stroke="#b9c4cc" />
        <path d="M4 17.500H10V19.500H3" fill="#aab4bb" />
      </StatusIcon>
      <StatusIcon>
        <path d="M12 4L16 0.500L19.500 4L16 8Z" fill="#eee" stroke="#888" />
        <path d="M1 19L3 11L10 4L16 9.500L9 17Z" fill="#7bc8f3" stroke="#3f8cc2" />
      </StatusIcon>
      <StatusIcon>
        <path d="M0.500 5H9L11 2H19V18.500H0.500Z" fill="#d6d6d6" stroke="#bcbcbc" />
      </StatusIcon>
      <StatusIcon>
        <path d="M1 1H19V16H1Z" fill="#2c8edb" stroke="#7fb5dc" />
        <path d="M5 4.500H15V12.500H5Z" fill="#2a7fc9" stroke="#fff" strokeWidth="1.500" />
        <path d="M3 17H17V19H3Z" fill="#9aa8b3" />
      </StatusIcon>
      <StatusIcon>
        <path d="M0.500 8H17.500V19H0.500Z" fill="#1b87dc" stroke="#98b4c8" />
        <path d="M8 1.500H19.500V9.500H8L4 7V3.500Z" fill="#7d8cf0" stroke="#4353b8" />
      </StatusIcon>
      <div className="flex items-center gap-0.5">
        <svg viewBox="0 0 14 20" className="h-5 w-3.5 shrink-0" aria-hidden="true">
          <rect x="1" y="1" width="12" height="18" fill="#8794ee" stroke="#5462b4" strokeDasharray="2 1" />
          <text x="7" y="14" textAnchor="middle" fontSize="12" fontWeight="700" fill="#fff" className={UI}>V</text>
        </svg>
        <span className="flex h-[19px] w-1 items-end border border-black bg-white">
          <span className="h-0.5 w-full bg-[#2f2]" />
        </span>
      </div>
      <StatusIcon>
        <circle cx="10" cy="10" r="9.300" fill="#8ad2f7" stroke="#4b97c4" />
        <path d="M8 6L14 9L17 13L13 18.500H8L12 13.500L8 10Z" fill="#7fd41c" stroke="#4f9c0e" />
        <circle cx="14" cy="4.500" r="1.500" fill="#234" />
      </StatusIcon>
      <StatusIcon>
        <rect x="0.500" y="0.500" width="19" height="19" rx="1" fill="#7fcdf7" stroke="#4a96c6" />
        <path d="M8 4H12V10H15.500L10 16L4.500 10H8Z" fill="#8fe04a" stroke="#3f8f1e" />
      </StatusIcon>
      <span className="font-['Open_Sans',sans-serif] text-xs text-black">Right Control</span>
    </footer>
  );
}

function TitleBar() {
  return (
    <header className="h-[54px] shrink-0 bg-white text-black">
      <div className="flex h-7 items-center">
        <svg viewBox="0 0 20 20" className="ml-0.5 size-5" aria-hidden="true">
          <rect width="20" height="20" fill="#343a48" />
          <path d="M3 10L9 9L12 5H20V8L14 9L11 14L7 20H2L8 12H3Z" fill="#ffbb55" />
          <path d="M3 8C5 6 10 4 11 5L8 9H4Z" fill="#f0501a" />
          <path d="M0.500 1H9V6H0.500Z" fill="#e8e8e8" stroke="#666" strokeWidth="0.500" />
          <path d="M2 3.500H4M5.500 3.500H7.500" stroke="#444" strokeWidth="2" />
        </svg>
        <h1 className="ml-[5px] flex-1 text-[15px]">Linux_Ububtu 20.04 [Running] - Oracle VM VirtualBox</h1>
        <div className="flex items-center pr-[25px]">
          <button aria-label="Minimize" className="mr-[45px]">
            <svg viewBox="0 0 13 13" className="size-[13px]" aria-hidden="true">
              <path d="M0 6.500H12" stroke="#000" />
            </svg>
          </button>
          <button aria-label="Restore" className="mr-[46px]">
            <svg viewBox="0 0 13 13" className="size-[13px]" fill="none" stroke="#000" aria-hidden="true">
              <path d="M0.500 3.500H9.500V12.500H0.500ZM2.500 3.500V1.500H11.500V10.500H9.500" />
            </svg>
          </button>
          <button aria-label="Close">
            <svg viewBox="0 0 13 13" className="size-[13px]" stroke="#000" aria-hidden="true">
              <path d="M0.500 0.500L12 12M12 0.500L0.500 12" />
            </svg>
          </button>
        </div>
      </div>
      <nav className="flex items-center gap-[26px] pl-2.5 font-['Open_Sans',sans-serif] text-xs leading-[26px]">
        {["File", "Machine", "View", "Input", "Devices", "Help"].map((m) => (
          <button key={m}>{m}</button>
        ))}
      </nav>
    </header>
  );
}

function PenMarks() {
  return (
    <svg viewBox="0 0 1920 1031" className="pointer-events-none absolute inset-0 z-20 size-full" fill="none" stroke="#fb0808" strokeWidth="2.400" strokeLinecap="round" strokeLinejoin="round" aria-hidden="true">
      <path d="M880 342L887 339C895 338 902 336 904 334L910 332C914 327 912 322 912 315C913 311 908 309 905 307C901 305 897 307 893 305L882 302C870 299 855 301 843 304C835 307 830 310 829 316C829 322 829 328 835 331C840 334 840 338 846 338C858 341 872 339 887 339" />
      <path d="M1373 333C1365 337 1362 340 1357 341C1350 344 1345 345 1337 345C1328 346 1320 346 1313 346L1283 343C1276 342 1268 342 1263 343C1256 343 1252 346 1249 353C1245 370 1245 385 1243 413L1240 457L1235 493L1232 507C1230 515 1230 525 1230 530C1227 560 1227 600 1228 620C1228 640 1229 650 1230 663C1232 680 1233 695 1237 712L1255 747L1265 765C1268 767 1270 766 1272 769C1280 773 1300 774 1313 771C1325 769 1330 766 1343 765C1360 762 1385 763 1400 763C1420 764 1430 765 1440 768C1450 769 1455 767 1475 766C1480 763 1482 757 1483 745C1486 715 1482 670 1480 630C1479 600 1481 570 1483 520C1485 480 1484 430 1482 397L1478 373L1474 352C1472 348 1468 345 1464 345C1455 341 1440 344 1428 343C1421 341 1416 336 1414 331C1411 325 1412 320 1411 317L1403 308C1399 306 1389 306 1385 308C1380 312 1379 315 1377 318C1374 321 1373 322 1373 325Q1374 330 1373 333" />
      <path d="M606 852C590 849 580 850 568 849C558 849 552 846 545 847L522 843C514 840 509 838 507 835C504 831 503 829 499 825C495 822 496 815 497 807C499 802 501 800 505 798C510 795 516 795 523 794L573 792L637 791L673 789C690 787 735 786 747 788C764 789 778 796 785 801C789 806 788 808 788 812C788 820 785 824 781 828C772 835 754 843 737 848C722 853 715 856 703 857C690 860 620 859 613 858C603 857 599 855 593 853L594 851" />
      <path d="M754 775L768 792C773 800 773 805 777 812L791 845L792 846C793 836 797 828 798 820C801 808 802 795 799 788C797 782 795 781 794 778" />
      <path d="M794 772C791 777 789 777 786 779L770 788C764 794 762 799 760 802C753 810 751 813 750 817C754 819 785 818 793 819L807 818L787 802C780 794 775 789 770 787C765 785 760 780 754 775" />
    </svg>
  );
}

export default function App() {
  return (
    <div className="relative flex min-h-screen flex-col bg-[#efefef] font-['Noto_Sans','Noto_Sans_CJK_KR',sans-serif]">
      <TitleBar />
      <div className="flex flex-1 flex-col px-[12.5%] pt-[26px] pb-6">
        <GuestScreen />
      </div>
      <StatusBar />
      <PenMarks />
    </div>
  );
}
